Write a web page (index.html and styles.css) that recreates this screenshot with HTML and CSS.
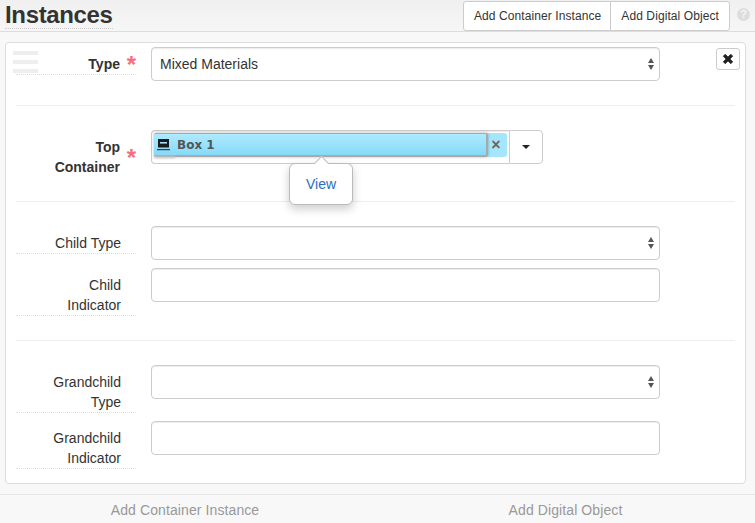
FILE: index.html
```html
<!DOCTYPE html>
<html lang="en">
<head>
<meta charset="utf-8">
<title>Instances</title>
<link rel="stylesheet" href="styles.css">
</head>
<body>
<header class="head">
  <h2 class="title">Instances</h2>
  <div class="btn-group">
    <button class="btn">Add Container Instance</button>
    <button class="btn">Add Digital Object</button>
  </div>
  <span class="help">?</span>
</header>
<section class="panel">
  <div class="drag"><i></i><i></i><i></i></div>
  <button class="close" aria-label="Remove"><svg width="12" height="12" viewBox="0 0 12 12"><path d="M3.2 1.3 6 4.1 8.8 1.3 10.7 3.2 7.9 6 10.7 8.8 8.8 10.7 6 7.9 3.2 10.7 1.3 8.8 4.1 6 1.3 3.2Z" fill="#222" stroke="#222" stroke-width=".8" stroke-linejoin="round"/></svg></button>

  <div class="row">
    <label class="label strong req">Type</label>
    <div class="select">Mixed Materials<span class="arrows"></span></div>
  </div>
  <hr class="rule">
  <div class="row row-linker">
    <label class="label strong req plain">Top Container</label>
    <div class="linker">
      <div class="linker-field">
        <div class="token">
          <div class="token-main">
            <svg class="box-icon" width="13" height="12" viewBox="0 0 13 12"><path d="M1 0h11v8.5H1z" fill="#1b1b1b"/><path d="M3 3h7v1.6H3z" fill="#9fe2fb"/><path d="M0 10.2h13v1H0z" fill="#1b1b1b"/></svg>
            <span>Box 1</span>
          </div>
          <span class="token-x">×</span>
        </div>
      </div>
      <div class="caret-btn"><span class="caret"></span></div>
      <div class="pop"><a href="#">View</a></div>
    </div>
  </div>
  <hr class="rule rule-b">
  <div class="row row-gap">
    <label class="label">Child Type</label>
    <div class="select"><span class="arrows"></span></div>
  </div>
  <div class="row">
    <label class="label">Child Indicator</label>
    <div class="input"></div>
  </div>
  <hr class="rule">
  <div class="row row-gap">
    <label class="label">Grandchild Type</label>
    <div class="select"><span class="arrows"></span></div>
  </div>
  <div class="row">
    <label class="label">Grandchild Indicator</label>
    <div class="input"></div>
  </div>
</section>
<footer class="foot">
  <a href="#">Add Container Instance</a>
  <a href="#">Add Digital Object</a>
</footer>
</body>
</html>
```
FILE: styles.css
```css
* { box-sizing: border-box; }
html, body { margin: 0; height: 100%; }
body {
  background: #f8f8f8;
  color: #333;
  font: 14px/20px "Liberation Sans", Arial, sans-serif;
  overflow: hidden;
}
.head {
  display: flex;
  align-items: flex-start;
  height: 32px;
  padding: 1px 0 0 5px;
  background: linear-gradient(#f0f0f0, #f6f6f6);
  border-bottom: 1px solid #ddd;
}
.title {
  margin: 0;
  height: 28px;
  font-size: 24px;
  line-height: 27px;
  font-weight: bold;
  letter-spacing: -0.35px;
  border-bottom: 1px dotted #ccc;
}
.btn-group { display: flex; margin-left: auto; height: 30px; }
.btn {
  padding: 0 9px 0 10px;
  font: 12px/18px "Liberation Sans", Arial, sans-serif;
  letter-spacing: 0.09px;
  color: #333;
  background: #fff;
  border: 1px solid #ccc;
  border-radius: 3px 0 0 3px;
}
.btn + .btn { margin-left: -1px; padding: 0 10px; border-radius: 0 3px 3px 0; }
.help {
  flex: none;
  width: 13px;
  height: 13px;
  margin: 7px 5px 0 7px;
  border-radius: 50%;
  background: #ddd;
  color: #f6f6f6;
  font: bold 11px/13px "Liberation Sans", Arial, sans-serif;
  text-align: center;
}
.panel {
  position: relative;
  width: 741px;
  height: 442px;
  margin: 10px 0 0 5px;
  padding: 4px 10px 0;
  background: #fff;
  border: 1px solid #ddd;
  border-radius: 4px;
}
.drag { position: absolute; left: 7px; top: 8px; }
.drag i { display: block; width: 25px; height: 4px; margin-bottom: 5px; background: #eee; }
.close {
  position: absolute;
  left: 710px;
  top: 5px;
  width: 24px;
  height: 22px;
  padding: 0;
  display: flex;
  align-items: center;
  justify-content: center;
  background: #fff;
  border: 1px solid #ccc;
  border-radius: 3px;
}
.row { display: flex; align-items: flex-start; }
.row-gap { margin-bottom: 8px; }
.label {
  position: relative;
  flex: none;
  width: 120px;
  margin-right: 15px;
  padding: 7px 15px 0 25px;
  text-align: right;
  border-bottom: 1px dotted #ddd;
  color: #333;
}
.strong { font-weight: bold; padding-right: 16px; }
.req::after {
  content: "*";
  position: absolute;
  right: 0;
  top: 50%;
  width: 12px;
  margin-top: -8px;
  color: #f4707f;
  font-size: 24px;
  line-height: 24px;
  font-weight: bold;
}
.plain { border-bottom: 0; height: 48px; }
.select, .input {
  position: relative;
  width: 509px;
  height: 34px;
  padding: 6px 8px;
  background: #fff;
  border: 1px solid #ccc;
  border-radius: 4px;
  box-shadow: inset 0 1px 1px rgba(0, 0, 0, .075);
}
.arrows { position: absolute; right: 4px; top: 10px; width: 7px; height: 12px; }
.arrows::before, .arrows::after {
  content: "";
  position: absolute;
  left: 0;
  border-left: 3.5px solid transparent;
  border-right: 3.5px solid transparent;
}
.arrows::before { top: 0; border-bottom: 5px solid #555; }
.arrows::after { bottom: 0; border-top: 5px solid #555; }
.rule { height: 1px; margin: 24px 0; border: 0; background: #eee; }
.rule-b { margin-top: 23px; }
.linker { position: relative; display: flex; width: 392px; height: 34px; }
.linker-field {
  width: 359px;
  padding: 2px;
  background: #fff;
  border: 1px solid #ccc;
  border-right: 0;
  border-radius: 4px 0 0 4px;
  box-shadow: inset 0 1px 1px rgba(0, 0, 0, .075);
}
.token {
  display: flex;
  width: 353px;
  height: 24px;
  background: #a6e6fd;
  border-radius: 3px;
}
.token-main {
  position: relative;
  display: flex;
  align-items: center;
  gap: 7px;
  width: 334px;
  height: 24px;
  padding: 1px 0 0 3px;
  background: linear-gradient(#aeeaff, #86daf9);
  border: 2px solid #a9a9a9;
  border-left-width: 0;
  border-top-width: 1px;
  box-shadow: 0 0 3px rgba(0, 0, 0, .3);
  border-radius: 2px;
  color: #555;
  font: bold 12px/16px "DejaVu Sans", Verdana, sans-serif;
}
.token-main::after {
  content: "";
  position: absolute;
  left: 0;
  bottom: -3px;
  width: 21px;
  height: 2px;
  background: #c4c4c4;
  filter: blur(1px);
}
.token-x {
  flex: 1;
  padding-right: 3px;
  text-align: center;
  color: #666;
  font: bold 16px/24px "Liberation Sans", Arial, sans-serif;
}
.caret-btn {
  width: 34px;
  display: flex;
  align-items: center;
  justify-content: center;
  background: #fff;
  border: 1px solid #ccc;
  border-radius: 0 4px 4px 0;
}
.caret { border-left: 4px solid transparent; border-right: 4px solid transparent; border-top: 4px solid #222; }
.pop {
  position: absolute;
  left: 138px;
  top: 33px;
  width: 64px;
  height: 42px;
  text-align: center;
  line-height: 40px;
  background: #fff;
  border: 1px solid #bbb;
  border-radius: 6px;
  box-shadow: 0 4px 10px rgba(0, 0, 0, .2);
}
.pop::before {
  content: "";
  position: absolute;
  left: 26px;
  top: -6px;
  width: 10px;
  height: 10px;
  background: #fff;
  border-left: 1px solid #bbb;
  border-top: 1px solid #bbb;
  transform: rotate(45deg);
}
.pop a { position: relative; color: #2a6ebb; text-decoration: none; }
.foot {
  display: grid;
  grid-template-columns: 370px 391px;
  height: 29px;
  margin-top: 10px;
  border-top: 1px solid #e6e6e6;
  text-align: center;
  line-height: 30px;
  letter-spacing: 0.1px;
}
.foot a { color: #999; text-decoration: none; }
```
